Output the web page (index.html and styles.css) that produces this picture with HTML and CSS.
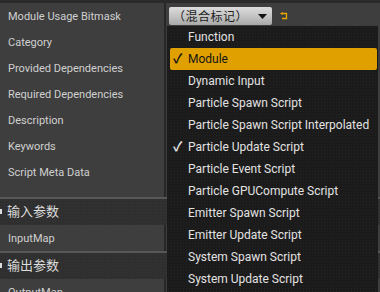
FILE: index.html
```html
<!DOCTYPE html>
<html lang="en">
<head>
  <meta charset="UTF-8">
  <title>Module Usage Bitmask</title>
  <link rel="stylesheet" href="styles.css">
</head>
<body>
  <div class="panel">
    <div class="group first">
      <div class="row">
        <div class="label">Module Usage Bitmask</div>
        <div class="value">
          <div class="combo">
            <span>（混合标记）</span>
            <svg class="arrow" width="9" height="5" viewBox="0 0 9 5"><path d="M0 0H9L4.5 5Z" fill="#111"/></svg>
          </div>
          <svg class="reset" width="8" height="8" viewBox="0 0 8 8">
            <path d="M0 1.5L2.5 0V3Z" fill="#e8a800"/>
            <path d="M2 1.5H6.5V6.5H2" fill="none" stroke="#e8a800" stroke-width="1.3"/>
          </svg>
        </div>
      </div>
      <div class="row"><div class="label">Category</div></div>
      <div class="row"><div class="label">Provided Dependencies</div></div>
      <div class="row"><div class="label">Required Dependencies</div></div>
      <div class="row"><div class="label">Description</div></div>
      <div class="row"><div class="label">Keywords</div></div>
      <div class="row"><div class="label">Script Meta Data</div></div>
    </div>

    <div class="section">输入参数</div>
    <div class="group">
      <div class="row"><div class="label">InputMap</div></div>
    </div>

    <div class="section">输出参数</div>
    <div class="group">
      <div class="row"><div class="label">OutputMap</div></div>
    </div>

    <ul class="menu">
      <li>Function</li>
      <li class="active checked">Module</li>
      <li>Dynamic Input</li>
      <li>Particle Spawn Script</li>
      <li>Particle Spawn Script Interpolated</li>
      <li class="checked">Particle Update Script</li>
      <li>Particle Event Script</li>
      <li>Particle GPUCompute Script</li>
      <li>Emitter Spawn Script</li>
      <li>Emitter Update Script</li>
      <li>System Spawn Script</li>
      <li>System Update Script</li>
    </ul>
  </div>
</body>
</html>
```

FILE: styles.css
```css
body {
  margin: 0;
  background: #2a2a2a;
  font-family: Roboto, "Noto Sans CJK SC", sans-serif;
  overflow: hidden;
}
.panel {
  position: relative;
  width: 380px;
  height: 292px;
  padding-top: 3px;
  box-sizing: border-box;
  overflow: hidden;
}
.group {
  background: linear-gradient(to right, #3e3e3e 164px, #272727 164px, #272727 166px, #3e3e3e 166px);
}
.group.first { padding-bottom: 12px; }
.group + .section { border-top: 2px solid #575757; }
.row {
  display: flex;
  align-items: center;
  height: 26px;
}
.label {
  width: 164px;
  padding-left: 8px;
  box-sizing: border-box;
  font-size: 11px;
  color: #d0d0d0;
}
.value {
  display: flex;
  align-items: center;
  gap: 8px;
  padding-left: 5px;
}
.combo {
  display: flex;
  align-items: center;
  justify-content: space-between;
  width: 103px;
  height: 18px;
  padding: 0 5px 0 4px;
  box-sizing: border-box;
  background: linear-gradient(#dcdcdc, #c4c4c4 50%, #a8a8a8);
  border-radius: 2px;
  font-family: "Noto Sans CJK SC", sans-serif;
  font-size: 12px;
  line-height: 18px;
  letter-spacing: 0.5px;
  color: #222;
}
.section {
  height: 26px;
  line-height: 26px;
  padding-left: 7px;
  position: relative;
  font-size: 13px;
  color: #dcdcdc;
  background: #2f2f2f radial-gradient(#363636 0.6px, transparent 0.8px) 0 0 / 3px 3px;
}
.section::before {
  content: "";
  position: absolute;
  left: 0;
  top: 10px;
  width: 2px;
  height: 5px;
  background: #ddd;
}
.menu {
  position: absolute;
  left: 167px;
  top: 26px;
  width: 211px;
  height: 270px;
  margin: 0;
  padding: 0;
  list-style: none;
  background: #1b1b1b radial-gradient(#232323 0.6px, transparent 0.8px) 0 0 / 3px 3px;
}
.menu li {
  position: relative;
  height: 22px;
  line-height: 22px;
  margin: 0 1px 0 3px;
  padding-left: 18px;
  font-size: 12px;
  color: #e2e2e2;
  border-radius: 2px;
}
.menu li.active {
  background: #e0a000;
  color: #151515;
}
.menu li.checked::before {
  content: "✓";
  position: absolute;
  left: 3px;
  font-size: 13px;
  font-weight: bold;
}
```
